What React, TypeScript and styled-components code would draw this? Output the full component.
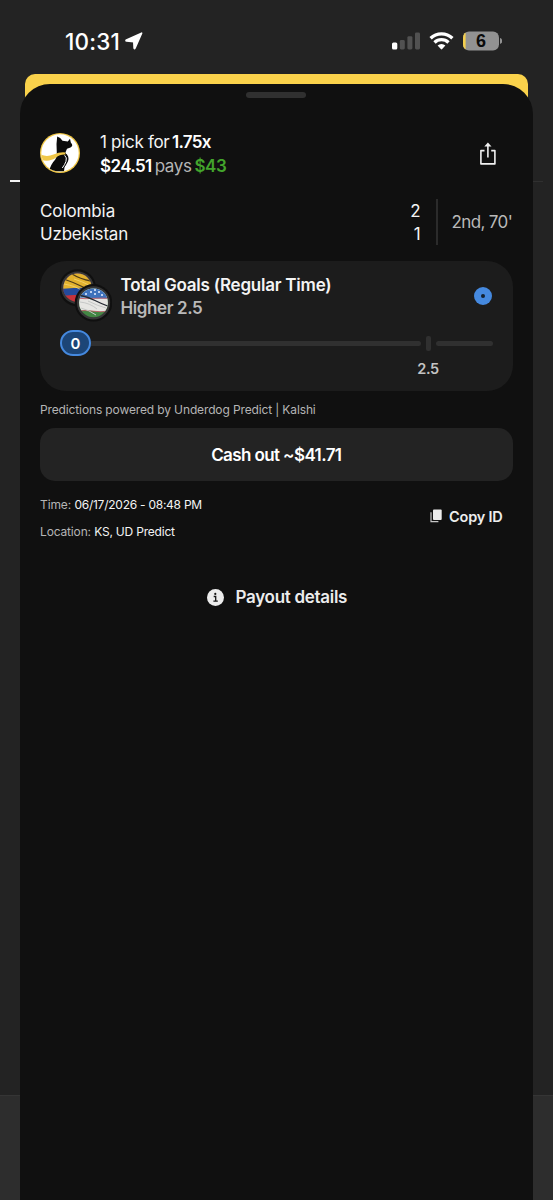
import React from "react";
import styled, { createGlobalStyle } from "styled-components";

const GlobalStyle = createGlobalStyle`
  * { box-sizing: border-box; }
  body { margin: 0; background: #232323; }
`;

const Screen = styled.main`
  position: relative;
  width: 553px;
  height: 1200px;
  overflow: hidden;
  background: #232323;
  color: #fff;
  font-family: Inter, "Liberation Sans", sans-serif;
`;

const TabIndicator = styled.div<{ $side: "left" | "right" }>`
  position: absolute;
  top: ${(p) => (p.$side === "left" ? 180 : 181)}px;
  ${(p) => p.$side}: 10px;
  width: 60px;
  height: ${(p) => (p.$side === "left" ? 2 : 1)}px;
  background: ${(p) => (p.$side === "left" ? "#f4f4f4" : "#303030")};
`;

const BottomNav = styled.div`
  position: absolute;
  left: 0;
  right: 0;
  bottom: 0;
  height: 105px;
  background: #2d2d2d;
  border-top: 1px solid #353535;
`;

const StatusBar = styled.header`
  display: flex;
  align-items: center;
  justify-content: space-between;
  height: 74px;
  padding: 8px 51px 0 65px;
`;

const Clock = styled.div`
  display: flex;
  align-items: center;
  gap: 5px;
  font-size: 22.5px;
  font-weight: 500;
  letter-spacing: 0.2px;
`;

const Indicators = styled.div`
  display: flex;
  align-items: center;
  gap: 9px;
`;

const PeekCard = styled.div`
  height: 40px;
  margin: 0 25px;
  border-radius: 10px 10px 0 0;
  background: #fad24b;
`;

const Sheet = styled.section`
  position: relative;
  display: flex;
  flex-direction: column;
  height: 1116px;
  margin: -30px 20.4px 0 20px;
  padding: 8px 20px 0;
  border-radius: 30px 30px 0 0;
  background: #101010;
`;

const Handle = styled.div`
  align-self: center;
  width: 60px;
  height: 6px;
  border-radius: 3px;
  background: #303030;
`;

const EntryHeader = styled.div`
  display: flex;
  align-items: center;
  height: 48px;
  margin-top: 31px;
`;

const EntryText = styled.div`
  flex: 1;
  margin: 3px 0 0 20px;
`;

const Line = styled.div<{ $size: number; $weight?: number; $color?: string; $track?: number; $height?: number }>`
  font-size: ${(p) => p.$size}px;
  font-weight: ${(p) => p.$weight ?? 400};
  color: ${(p) => p.$color ?? "#f4f4f4"};
  letter-spacing: ${(p) => p.$track ?? 0}px;
  line-height: ${(p) => p.$height ?? 23.5}px;
  white-space: nowrap;
`;

const Run = styled.span<{ $weight?: number; $color?: string; $track?: number; $gap?: number }>`
  font-weight: ${(p) => p.$weight ?? 400};
  color: ${(p) => p.$color ?? "#f4f4f4"};
  letter-spacing: ${(p) => p.$track ?? 0}px;
  margin-right: ${(p) => p.$gap ?? 0}px;
`;

const ShareButton = styled.button`
  display: flex;
  margin: 1px 16px 0 0;
  padding: 0;
  border: 0;
  background: none;
`;

const Match = styled.div`
  display: flex;
  align-items: center;
  height: 47px;
  margin-top: 22px;
`;

const Teams = styled.div`
  flex: 1;
  padding-top: 1px;
`;

const Scores = styled.div`
  padding-top: 1px;
  text-align: right;
`;

const MatchClock = styled.div`
  display: flex;
  align-items: center;
  height: 46px;
  width: 77px;
  margin: -1px 0 0 15px;
  padding: 1px 0 0 14px;
  border-left: 2px solid #2b2b2b;
`;

const PickCard = styled.article`
  height: 130px;
  margin-top: 15px;
  padding: 8px 20px 0;
  border-radius: 26px;
  background: #1c1c1c;
`;

const PickTop = styled.div`
  display: flex;
  height: 54px;
`;

const PickText = styled.div`
  flex: 1;
  margin-left: 8.5px;
  padding-top: 4.5px;
`;

const LiveDot = styled.div`
  display: flex;
  align-items: center;
  justify-content: center;
  width: 18px;
  height: 18px;
  margin-top: 18px;
  margin-right: 1px;
  border-radius: 50%;
  background: #4589df;

  &::after {
    content: "";
    width: 4px;
    height: 4px;
    border-radius: 50%;
    background: #14202f;
  }
`;

const Track = styled.div`
  display: flex;
  align-items: center;
  height: 26px;
  margin-top: 7px;
`;

const Thumb = styled.div`
  display: flex;
  align-items: center;
  justify-content: center;
  flex: none;
  width: 31px;
  height: 26px;
  border: 2px solid #4589df;
  border-radius: 13px;
  background: #1c4577;
  font-size: 15px;
  font-weight: 600;
`;

const Segment = styled.div<{ $width: number; $start?: boolean }>`
  width: ${(p) => p.$width}px;
  height: 5px;
  border-radius: ${(p) => (p.$start ? "0 3px 3px 0" : "3px")};
  background: #303030;
`;

const Tick = styled.div`
  flex: none;
  width: 5px;
  height: 15px;
  margin: 0 5px;
  border-radius: 2px;
  background: #303030;
`;

const TickLabel = styled.div`
  width: 60px;
  margin: 3px 0 0 338px;
  text-align: center;
  font-size: 14.5px;
  font-weight: 600;
  line-height: 20px;
  letter-spacing: -0.4px;
  color: #c3c3c3;
`;

const Powered = styled.div`
  margin-top: 9px;
  font-size: 12px;
  line-height: 20px;
  letter-spacing: -0.13px;
  color: #b5b5b5;
`;

const CashOut = styled.button`
  height: 53px;
  margin: 8px 0 0;
  padding: 0;
  border: 0;
  border-radius: 15px;
  background: #232323;
  color: #fff;
  font: 600 17px Inter, "Liberation Sans", sans-serif;
  letter-spacing: -0.6px;
`;

const Meta = styled.div`
  display: flex;
  justify-content: space-between;
  margin-top: 10px;
`;

const CopyButton = styled.button`
  display: flex;
  align-items: center;
  gap: 7px;
  height: 24px;
  margin: 13px 10px 0 0;
  padding: 0;
  border: 0;
  background: none;
  color: #ececec;
  font: 600 14.5px Inter, "Liberation Sans", sans-serif;
  letter-spacing: -0.2px;
`;

const Payout = styled.button`
  display: flex;
  align-items: center;
  align-self: center;
  gap: 12px;
  margin: 39px 0 0 1px;
  height: 26px;
  padding: 0;
  border: 0;
  background: none;
  color: #ececec;
  font: 600 17px Inter, "Liberation Sans", sans-serif;
  letter-spacing: -0.3px;
`;

const LocationArrow = () => (
  <svg width="18" height="18" viewBox="0 0 18 18">
    <path d="M16.6 1.2 10 16.2q-.6 1-.9-.2L8.8 9.6 1.6 9q-1.2-.4-.1-1z" fill="#fff" stroke="#fff" strokeWidth="1.6" strokeLinejoin="round" />
  </svg>
);

const Signal = () => (
  <svg width="28" height="18" viewBox="0 0 28 18">
    <rect x="0" y="10.5" width="5.3" height="7" rx="1.5" fill="#fff" />
    <rect x="7.8" y="8" width="5" height="9.5" rx="1.4" fill="#515151" />
    <rect x="15.4" y="4.2" width="5" height="13.3" rx="1.4" fill="#515151" />
    <rect x="23" y="0.5" width="5" height="17" rx="1.4" fill="#515151" />
  </svg>
);

const Wifi = () => (
  <svg width="25" height="18" viewBox="0 0 25 18">
    <g fill="none" stroke="#fff" strokeWidth="3.3">
      <path d="M1.6 6.3a15.6 15.6 0 0 1 21.8 0" />
      <path d="M5.5 10.5a10 10 0 0 1 14 0" />
    </g>
    <path d="M8.6 13.6a5.6 5.6 0 0 1 7.8 0l-3.2 3.5q-.7.7-1.4 0z" fill="#fff" />
  </svg>
);

const Battery = () => (
  <svg width="39" height="20" viewBox="0 0 39 20">
    <defs>
      <clipPath id="cell"><rect x="0" y="0.5" width="36" height="19" rx="6" /></clipPath>
    </defs>
    <g clipPath="url(#cell)">
      <rect width="36" height="20" fill="#929292" />
      <rect width="2.6" height="20" fill="#f4cf4d" />
    </g>
    <path d="M37 7q2.400.7 2.400 3T37 13z" fill="#929292" />
    <text x="18" y="16.100" textAnchor="middle" fontFamily="Liberation Sans, sans-serif" fontSize="18" fontWeight="700" fill="#0b0b0b">6</text>
  </svg>
);

const DogLogo = () => (
  <svg width="40" height="40" viewBox="0 0 40 40">
    <defs>
      <clipPath id="badge"><circle cx="20" cy="20" r="18.6" /></clipPath>
    </defs>
    <circle cx="20" cy="20" r="20" fill="#f0c747" />
    <circle cx="20" cy="20" r="18.7" fill="#fff" />
    <g clipPath="url(#badge)">
      <path d="M16.800 20 16.500 11 17.200 3.500Q20.500 4.500 22.500 7.800L27.800 8.600 30 5.800 30.800 9.500Q32.600 11 32.200 13L30.500 14.600 27 15.800 25.400 19.500Q28.600 24 26.800 29L24.500 34 24 38.500H9Q10.500 31.500 15.300 26.500Q17 24 16.800 20z" fill="#0b0b0b" />
      <path d="M0 21.500Q7 24.300 13.500 21.500T25.300 19.400L25.800 21.500Q20 21 16 24.600Q10 29.300 1 27z" fill="#f0c747" />
      <path d="M25.300 20.200Q29.800 23 28 28.200Q26.500 32 22.500 36.500Q25.500 30 26 27.500Q26.800 24 25.300 20.200z" fill="#0b0b0b" />
      <path d="M24.600 22.300Q27.300 24.500 26 28.300Q25 31.500 22.300 35" fill="none" stroke="#fff" strokeWidth="1" />
    </g>
  </svg>
);

const ShareIcon = () => (
  <svg width="18" height="24" viewBox="0 0 18 24" fill="none" stroke="#f1f1f1" strokeWidth="1.6" strokeLinejoin="round">
    <path d="M5.500 8.600H1.900V21.900H15.900V8.600H12.200" />
    <path d="M8.900 15.500V2.500" />
    <path d="M8.900.5 12.500 4.500H5.300z" fill="#f1f1f1" stroke="none" />
  </svg>
);

const Flags = () => (
  <svg width="52" height="54" viewBox="0 0 52 54">
    <defs>
      <clipPath id="colombia"><circle cx="17.500" cy="18.800" r="14.200" /></clipPath>
      <clipPath id="uzbekistan"><circle cx="33.500" cy="33.800" r="14.400" /></clipPath>
    </defs>
    <circle cx="17.500" cy="18.800" r="18.500" fill="#101010" />
    <circle cx="17.500" cy="18.800" r="16.300" fill="#373737" />
    <g clipPath="url(#colombia)">
      <path d="M0 3h36v34H0z" fill="#c6323b" />
      <path d="M0 3h36v23q-18-1-36 1z" fill="#244a9a" />
      <path d="M0 3h36v16q-18-1-36 1z" fill="#e3b22e" />
      <path d="M5 10.500q9 3 17 7t12 4M12 5q8 5 19 7" stroke="#4f3c18" strokeWidth="1.300" fill="none" />
      <path d="M4 15q12 2 19 7M14 10q7 2 17 7" stroke="#f2d476" strokeWidth="0.800" fill="none" />
    </g>
    <circle cx="33.500" cy="33.800" r="18.800" fill="#101010" />
    <circle cx="33.500" cy="33.800" r="16.600" fill="#373737" />
    <g clipPath="url(#uzbekistan)">
      <path d="M16 18h34v34H16z" fill="#438744" />
      <path d="M16 18h34v23.500q-9 2-17 .5t-17 0z" fill="#e6e6e3" />
      <path d="M16 18h34v11q-9 1-17 0t-17 0z" fill="#3e72bc" />
      <path d="M17 29.200q8 .8 16 .2t16 0M17 42q8-1 16 .2t16-.2" stroke="#ba5a63" strokeWidth="0.900" fill="none" />
      <path d="M19 26q9 2 16 5.500t14 6" stroke="#252a32" strokeWidth="1.300" fill="none" />
      <path d="M20 33q10 1 17 7M28 32q10 5 18 7M21 39q8 2 15 7" stroke="#c5c7c6" strokeWidth="1" fill="none" />
      <path d="M25 25h2m3-2h2m2 2h2m2-2h2m-6-2h2m5 5h2" stroke="#e6efff" strokeWidth="1.400" />
    </g>
  </svg>
);

const CopyIcon = () => (
  <svg width="12" height="14" viewBox="0 0 12 14">
    <rect x="3" y="0.500" width="8.700" height="10.500" rx="0.900" fill="#ececec" />
    <path d="M1 3.200V12.700H8.400" fill="none" stroke="#c5c5c5" strokeWidth="1.200" />
  </svg>
);

const InfoIcon = () => (
  <svg width="17" height="17" viewBox="0 0 17 17">
    <circle cx="8.500" cy="8.500" r="8.500" fill="#ececec" />
    <circle cx="8.300" cy="4.900" r="1.100" fill="#151515" />
    <path d="M6.700 7.500H8.700V12M6.400 12.100H10.800" stroke="#151515" strokeWidth="1.300" fill="none" />
  </svg>
);

export default function App() {
  return (
    <Screen>
      <GlobalStyle />
      <TabIndicator $side="left" />
      <TabIndicator $side="right" />
      <BottomNav />
      <StatusBar>
        <Clock>10:31<LocationArrow /></Clock>
        <Indicators><Signal /><Wifi /><Battery /></Indicators>
      </StatusBar>
      <PeekCard />
      <Sheet>
        <Handle />
        <EntryHeader>
          <DogLogo />
          <EntryText>
            <Line $size={17}>
              <Run $track={-0.3} $gap={2.5}>1 pick for</Run>
              <Run $weight={600} $track={-0.7} $color="#fff">1.75x</Run>
            </Line>
            <Line $size={17}>
              <Run $weight={600} $track={-0.6} $gap={3} $color="#fff">$24.51</Run>
              <Run $track={-0.4} $gap={3} $color="#b5b5b5">pays</Run>
              <Run $weight={600} $track={-0.5} $color="#43a52c">$43</Run>
            </Line>
          </EntryText>
          <ShareButton aria-label="Share"><ShareIcon /></ShareButton>
        </EntryHeader>
        <Match>
          <Teams>
            <Line $size={17} $track={-0.1}>Colombia</Line>
            <Line $size={17} $track={-0.2}>Uzbekistan</Line>
          </Teams>
          <Scores>
            <Line $size={17}>2</Line>
            <Line $size={17}>1</Line>
          </Scores>
          <MatchClock>
            <Line $size={17} $track={-0.65} $color="#b9b9b9">2nd, 70'</Line>
          </MatchClock>
        </Match>
        <PickCard>
          <PickTop>
            <Flags />
            <PickText>
              <Line $size={17} $weight={600} $track={-0.23}>Total Goals (Regular Time)</Line>
              <Line $size={17} $weight={600} $track={-0.4} $color="#b9b9b9">Higher 2.5</Line>
            </PickText>
            <LiveDot />
          </PickTop>
          <Track>
            <Thumb>0</Thumb>
            <Segment $width={330} $start />
            <Tick />
            <Segment $width={57} />
          </Track>
          <TickLabel>2.5</TickLabel>
        </PickCard>
        <Powered>Predictions powered by Underdog Predict | Kalshi</Powered>
        <CashOut>Cash out ~$41.71</CashOut>
        <Meta>
          <div>
            <Line $size={12} $height={27} $track={-0.25}><Run $color="#b5b5b5" $track={-0.1}>Time: </Run>06/17/2026 - 08:48 PM</Line>
            <Line $size={12} $height={27} $track={-0.2}><Run $color="#b5b5b5" $track={-0.15}>Location: </Run>KS, UD Predict</Line>
          </div>
          <CopyButton><CopyIcon />Copy ID</CopyButton>
        </Meta>
        <Payout><InfoIcon />Payout details</Payout>
      </Sheet>
    </Screen>
  );
}
